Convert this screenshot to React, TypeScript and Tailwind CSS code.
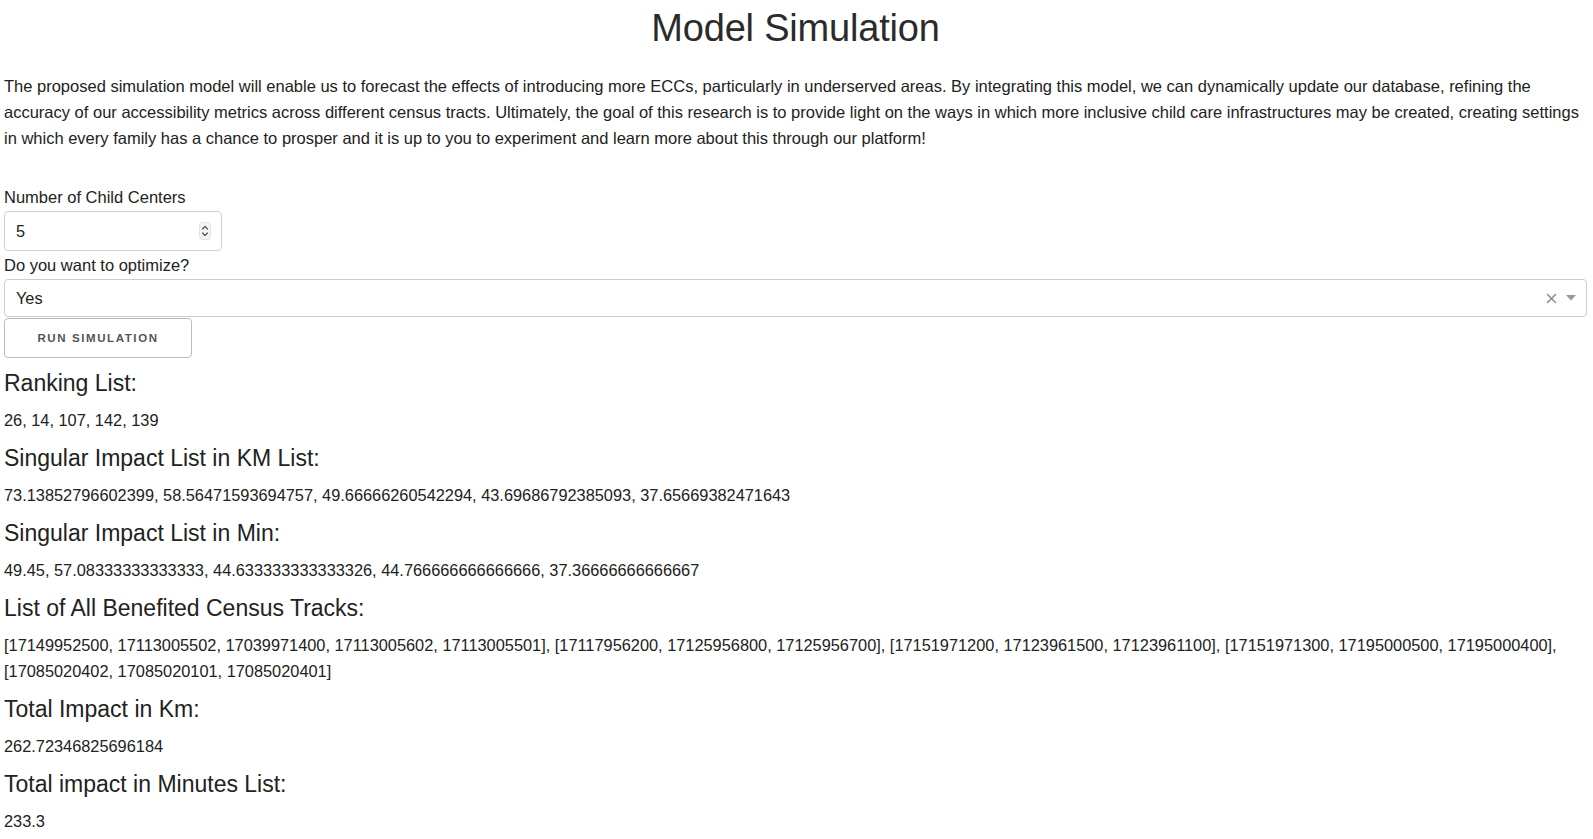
import React from "react";

const values = [
  { h: "Ranking List:", v: ["26, 14, 107, 142, 139"] },
  {
    h: "Singular Impact List in KM List:",
    v: ["73.13852796602399, 58.56471593694757, 49.66666260542294, 43.69686792385093, 37.65669382471643"],
  },
  {
    h: "Singular Impact List in Min:",
    v: ["49.45, 57.08333333333333, 44.633333333333326, 44.766666666666666, 37.36666666666667"],
  },
  {
    h: "List of All Benefited Census Tracks:",
    v: [
      "[17149952500, 17113005502, 17039971400, 17113005602, 17113005501], [17117956200, 17125956800, 17125956700], [17151971200, 17123961500, 17123961100], [17151971300, 17195000500, 17195000400], [17085020402, 17085020101, 17085020401]",
    ],
  },
  { h: "Total Impact in Km:", v: ["262.72346825696184"] },
  { h: "Total impact in Minutes List:", v: ["233.3"] },
];

export default function App() {
  return (
    <div className="min-h-screen bg-white pl-[4px] pr-[6px] font-['Liberation_Sans',Arial,Helvetica,sans-serif] text-[#222]">
      <h1 className="pt-[5px] text-center text-[38px] leading-[46px] tracking-[-0.2px] text-[#2b2b2b]">
        Model Simulation
      </h1>
      <p className="mt-[22px] text-[16.5px] leading-[26px] text-[#222]">
        The proposed simulation model will enable us to forecast the effects of introducing more ECCs, particularly in
        underserved areas. By integrating this model, we can dynamically update our database, refining the accuracy of
        our accessibility metrics across different census tracts. Ultimately, the goal of this research is to provide
        light on the ways in which more inclusive child care infrastructures may be created, creating settings in which
        every family has a chance to prosper and it is up to you to experiment and learn more about this through our
        platform!
      </p>

      <div className="mt-[34px] text-[16.5px] leading-[24px]">Number of Child Centers</div>
      <div className="mt-[2px] flex h-[40px] w-[218px] items-center justify-between rounded-[4px] border border-[#d1d1d1] bg-white pl-[11px] pr-[10px] text-[16.3px]">
        <span>5</span>
        <svg width="12" height="18" viewBox="0 0 12 18" aria-hidden="true">
          <rect x="0.5" y="0.5" width="11" height="17" rx="3" fill="#f4f4f4" stroke="#e4e4e4" />
          <path d="M3.5 7 L6 4.5 L8.5 7" fill="none" stroke="#555" strokeWidth="1.2" strokeLinecap="round" strokeLinejoin="round" />
          <path d="M3.5 11 L6 13.5 L8.5 11" fill="none" stroke="#555" strokeWidth="1.2" strokeLinecap="round" strokeLinejoin="round" />
        </svg>
      </div>

      <div className="mt-[2px] text-[16.5px] leading-[24px]">Do you want to optimize?</div>
      <div className="mt-[2px] flex h-[38px] w-full items-center justify-between rounded-[4px] border border-[#ccc] bg-white pl-[11px] pr-[10px] text-[16.3px]">
        <span>Yes</span>
        <div className="flex items-center gap-[9px]">
          <svg width="11" height="11" viewBox="0 0 11 11" aria-hidden="true">
            <path d="M1.5 1.5 L9.5 9.5 M9.5 1.5 L1.5 9.5" stroke="#8a8a8a" strokeWidth="1.5" strokeLinecap="round" />
          </svg>
          <svg width="10" height="6" viewBox="0 0 10 6" aria-hidden="true">
            <path d="M0 0 L10 0 L5 5.5 Z" fill="#999" />
          </svg>
        </div>
      </div>

      <button className="mt-[1px] flex h-[40px] w-[188px] items-center justify-center rounded-[4px] border border-[#bbb] bg-white pt-[2px] text-[11.5px] font-semibold tracking-[1.6px] text-[#555]">
        RUN SIMULATION
      </button>

      <div className="mt-[10px]">
        {values.map((item) => (
          <div key={item.h}>
            <h4 className="mb-[9px] text-[23px] leading-[30px] text-[#222]">{item.h}</h4>
            {item.v.map((t) => (
              <p key={t} className="mb-[10px] text-[16.35px] leading-[26px] text-[#222]">
                {t}
              </p>
            ))}
          </div>
        ))}
      </div>
    </div>
  );
}
